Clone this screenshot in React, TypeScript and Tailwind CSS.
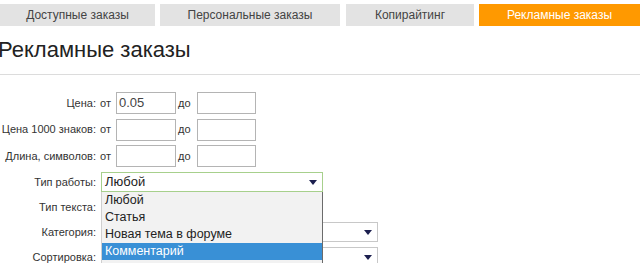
import React from "react";

const Arrow = () => (
  <svg width="8" height="5" viewBox="0 0 8 5" className="shrink-0">
    <path d="M0 0 L8 0 L4 5 Z" fill="#1c1f4f" />
  </svg>
);

const Tab = ({ label, w, active }: { label: string; w: string; active?: boolean }) => (
  <div
    className={`${w} h-[22px] flex items-center justify-center text-[12px] ${
      active ? "bg-[#ff9900] text-white" : "bg-[#e3e3e3] text-[#444]"
    }`}
  >
    {label}
  </div>
);

const RangeRow = ({ label, from }: { label: string; from?: string }) => (
  <div className="flex items-center h-[22px]">
    <div className="w-[96px] text-right text-[11px] text-[#333]">{label}</div>
    <div className="w-[20px] pl-[4px] text-[11px] text-[#333]">от</div>
    <div className="w-[60px] h-[22px] border border-[#b4b4b4] bg-white text-[13px] text-[#444] pl-[2px] leading-[20px]">
      {from}
    </div>
    <div className="w-[21px] pl-[2px] text-[11px] text-[#333]">до</div>
    <div className="w-[59px] h-[22px] border border-[#b4b4b4] bg-white" />
  </div>
);

const SelectRow = ({
  label,
  w,
  value,
  green,
}: {
  label: string;
  w: string;
  value?: string;
  green?: boolean;
}) => (
  <div className="flex items-center h-[20px]">
    <div className="w-[96px] text-right text-[11px] text-[#333]">{label}</div>
    <div
      className={`ml-[5px] ${w} h-[20px] border ${
        green ? "border-[#a7d08c]" : "border-[#c8c8c8]"
      } bg-white flex items-center justify-between pl-[3px] pr-[5px] text-[13px] text-[#222]`}
    >
      <span>{value}</span>
      <Arrow />
    </div>
  </div>
);

export default function App() {
  return (
    <div className="w-[640px] h-[263px] overflow-hidden bg-white relative font-['Liberation_Sans',Arial,sans-serif]">
      <div className="flex pt-[4px]">
        <Tab label="Доступные заказы" w="w-[155px]" />
        <div className="w-[5px]" />
        <Tab label="Персональные заказы" w="w-[180px]" />
        <div className="w-[6px]" />
        <Tab label="Копирайтинг" w="w-[128px]" />
        <div className="w-[5px]" />
        <Tab label="Рекламные заказы" w="w-[161px]" active />
      </div>
      <div className="pt-[10px] ml-[-2px] text-[22px] leading-[28px] text-[#222]">
        Рекламные заказы
      </div>
      <div className="mt-[10px] h-px bg-[#dcdcdc]" />
      <div className="pt-[17px] flex flex-col gap-[4.5px]">
        <RangeRow label="Цена:" from="0.05" />
        <RangeRow label="Цена 1000 знаков:" />
        <RangeRow label="Длина, символов:" />
      </div>
      <div className="pt-[5px] flex flex-col gap-[5px] relative">
        <SelectRow label="Тип работы:" w="w-[222px]" value="Любой" green />
        <SelectRow label="Тип текста:" w="w-[222px]" />
        <SelectRow label="Категория:" w="w-[277px]" />
        <SelectRow label="Сортировка:" w="w-[277px]" />
        <div className="absolute left-[101px] top-[25px] w-[222px] bg-[#f2f2f2] border-l border-[#cfcfcf] border-r border-r-[#6b6b6b] text-[12.5px] text-[#222]">
          <div className="h-[17px] leading-[17px] pl-[3px]">Любой</div>
          <div className="h-[17px] leading-[17px] pl-[3px]">Статья</div>
          <div className="h-[17px] leading-[17px] pl-[3px]">Новая тема в форуме</div>
          <div className="h-[17px] leading-[17px] pl-[3px] bg-[#3990d6] text-white">Комментарий</div>
          <div className="h-[17px]" />
        </div>
      </div>
    </div>
  );
}
